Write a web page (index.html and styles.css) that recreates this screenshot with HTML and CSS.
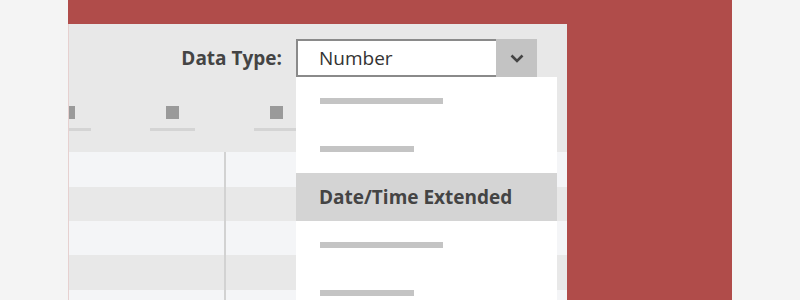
FILE: index.html
```html
<!DOCTYPE html>
<html lang="en">
<head>
    <meta charset="UTF-8">
    <meta name="viewport" content="width=device-width, initial-scale=1.0">
    <title>Data Type</title>
    <link rel="stylesheet" href="styles.css">
</head>
<body>
    <div class="frame">
        <div class="window">
            <div class="toolbar">
                <div class="field-row">
                    <label class="field-label" for="data-type">Data Type:</label>
                    <div class="combo" id="data-type">
                        <div class="combo-value">Number</div>
                        <div class="combo-button">
                            <svg width="14" height="9" viewBox="0 0 14 9">
                                <path d="M1.5 1.5 L7 7 L12.5 1.5" fill="none" stroke="#444" stroke-width="2.6"/>
                            </svg>
                        </div>
                    </div>
                </div>
                <div class="ribbon">
                    <div class="ribbon-item"><span class="ribbon-icon"></span><span class="ribbon-line"></span></div>
                    <div class="ribbon-item"><span class="ribbon-icon"></span><span class="ribbon-line"></span></div>
                    <div class="ribbon-item"><span class="ribbon-icon"></span><span class="ribbon-line"></span></div>
                </div>
            </div>

            <div class="grid">
                <div class="row light"><div class="cell first"></div><div class="cell"></div></div>
                <div class="row dark short"><div class="cell first"></div><div class="cell"></div></div>
                <div class="row light short"><div class="cell first"></div><div class="cell"></div></div>
                <div class="row dark"><div class="cell first"></div><div class="cell"></div></div>
                <div class="row light"><div class="cell first"></div><div class="cell"></div></div>
            </div>

            <ul class="dropdown">
                <li class="option"><span class="bar long"></span></li>
                <li class="option"><span class="bar"></span></li>
                <li class="option selected">Date/Time Extended</li>
                <li class="option"><span class="bar long"></span></li>
                <li class="option"><span class="bar"></span></li>
            </ul>
        </div>
    </div>
</body>
</html>
```

FILE: styles.css
```css
body {
    margin: 0;
    background: #f4f4f4;
    font-family: "Open Sans", "Noto Sans", sans-serif;
    color: #444;
}
.frame {
    margin-left: 68px;
    width: 664px;
    height: 300px;
    padding-top: 24px;
    box-sizing: border-box;
    background: #b04c4a;
    overflow: hidden;
}
.window {
    position: relative;
    width: 499px;
    height: 276px;
    background: #e8e8e8;
    border-left: 1px solid #e6d0cf;
    box-sizing: border-box;
    overflow: hidden;
}
.toolbar {
    height: 128px;
    padding-top: 15px;
    box-sizing: border-box;
}
.field-row {
    display: flex;
    justify-content: flex-end;
    align-items: center;
    gap: 14px;
    padding-right: 30px;
}
.field-label {
    font-weight: 700;
    font-size: 19px;
    color: #444;
}
.combo {
    display: flex;
    width: 241px;
    height: 38px;
}
.combo-value {
    flex: 1;
    background: #fff;
    border: 2px solid #8a8a8a;
    border-right: none;
    padding-left: 21px;
    font-size: 19px;
    line-height: 34px;
    color: #333;
}
.combo-button {
    width: 41px;
    background: #c3c3c3;
    display: flex;
    align-items: center;
    justify-content: center;
}
.ribbon {
    display: flex;
    margin-top: 29px;
    margin-left: -53px;
}
.ribbon-item {
    width: 104px;
    display: flex;
    flex-direction: column;
    align-items: center;
    gap: 9px;
}
.ribbon-icon {
    width: 13px;
    height: 13px;
    background: #9a9a9a;
}
.ribbon-line {
    width: 45px;
    height: 3px;
    background: #d4d4d4;
}
.row {
    display: flex;
    height: 35px;
}
.row.short {
    height: 34px;
}
.light {
    background: #f4f5f7;
}
.dark {
    background: #e8e8e8;
}
.cell.first {
    width: 155px;
    border-right: 2px solid #d2d2d2;
}
.dropdown {
    position: absolute;
    left: 227px;
    top: 53px;
    width: 261px;
    margin: 0;
    padding: 0;
    list-style: none;
    background: #fff;
}
.option {
    height: 48px;
    display: flex;
    align-items: center;
    padding-left: 24px;
}
.option.selected {
    background: #d4d4d4;
    padding-left: 23px;
    font-weight: 700;
    font-size: 19px;
    color: #444;
}
.bar {
    width: 94px;
    height: 6px;
    background: #c4c4c4;
}
.bar.long {
    width: 123px;
}
```
